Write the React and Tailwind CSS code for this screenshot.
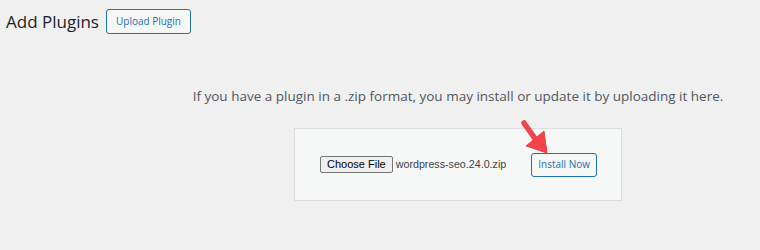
import { useState } from 'react';

const sans = "font-['Segoe_UI','Open_Sans',sans-serif]";

const PointerArrow = () => (
  <svg
    className="absolute left-[515px] top-[115px] pointer-events-none"
    width="40"
    height="45"
    viewBox="0 0 40 45"
  >
    <line x1="9" y1="8" x2="21" y2="25" stroke="#f2434a" strokeWidth="5.5" strokeLinecap="round" />
    <polygon points="32,38 11,31 29,16" fill="#f2434a" stroke="#f2434a" strokeWidth="1" strokeLinejoin="round" />
  </svg>
);

const App = () => {
  const [fileName] = useState('wordpress-seo.24.0.zip');

  return (
    <div className={`relative w-[760px] h-[250px] overflow-hidden bg-[#f0f0f1] ${sans}`}>
      {/* Header */}
      <div className="flex items-center pt-[9px] pl-[6px] gap-[7px]">
        <h1 className="text-[17px] leading-[25px] font-normal text-[#1d2327]">Add Plugins</h1>
        <button
          type="button"
          className="h-[25px] px-[9px] bg-[#f6f7f7] border border-[#2271b1] rounded-[3px] text-[10px] font-medium text-[#2271b1]"
        >
          Upload Plugin
        </button>
      </div>

      {/* Upload area */}
      <div className="pl-[156px] flex flex-col items-center">
        <p className="mt-[52px] text-[13.5px] leading-[20px] text-[#50575e] whitespace-nowrap">
          If you have a plugin in a .zip format, you may install or update it by uploading it here.
        </p>

        <form className="mt-[22px] w-[328px] h-[73px] bg-[#f6f7f7] border border-[#dcdcde] flex items-center justify-center pl-[1px]">
          <button
            type="button"
            className="h-[17px] px-[6px] bg-[#efefef] border border-[#767676] rounded-[2px] text-[11px] leading-none text-black font-['Liberation_Sans',Arial,sans-serif]"
          >
            Choose File
          </button>
          <span className="ml-[3px] text-[10.7px] text-[#3c434a] font-['Liberation_Sans',Arial,sans-serif]">{fileName}</span>
          <button
            type="submit"
            className="ml-[25px] h-[24px] px-[6px] bg-[#f6f7f7] border border-[#2271b1] rounded-[3px] text-[10px] text-[#2271b1]"
          >
            Install Now
          </button>
        </form>
      </div>

      <PointerArrow />
    </div>
  );
};

export default App;
